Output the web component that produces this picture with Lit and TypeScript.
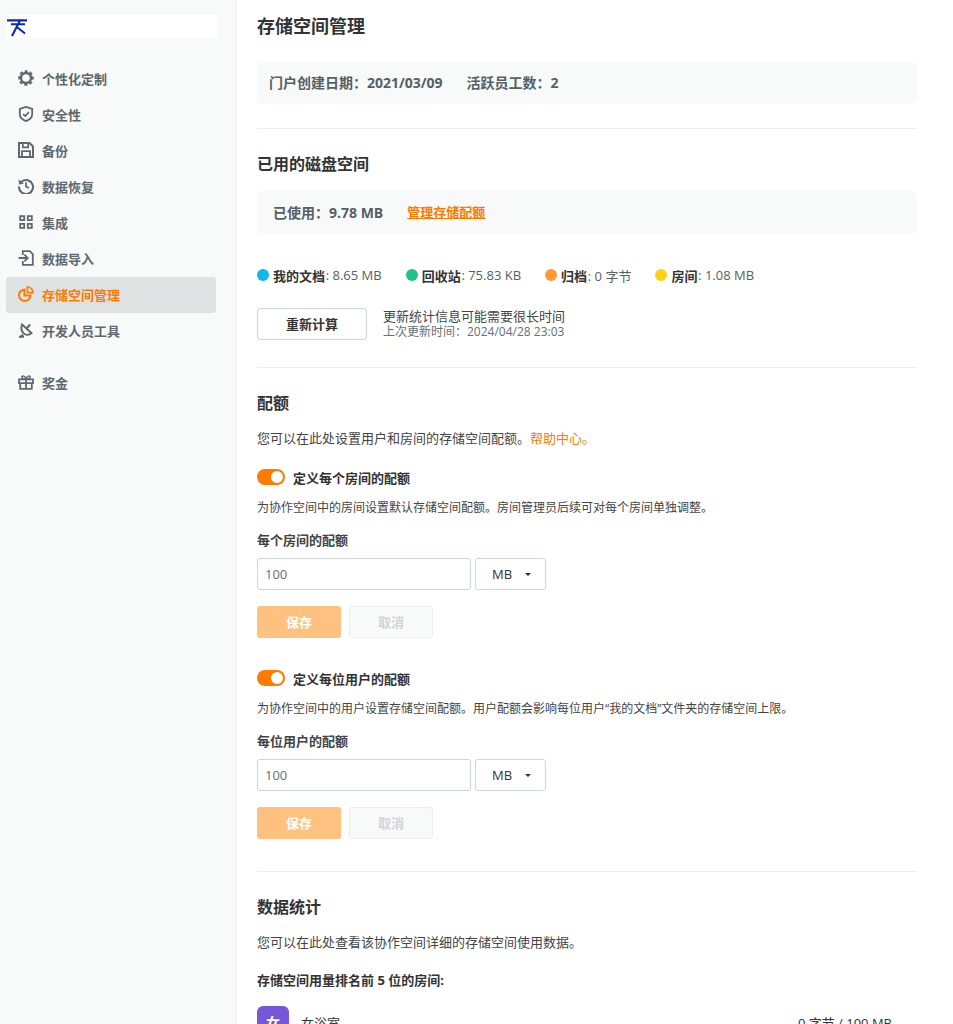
import { LitElement, html, css, svg } from "lit";
import { customElement } from "lit/decorators.js";

const icons: Record<string, unknown> = {
  gear: svg`<g fill="none" stroke="currentColor"><circle cx="8" cy="8" r="5" stroke-width="2.400"/><circle cx="8" cy="8" r="6.900" stroke-width="1.800" stroke-dasharray="3.200 2.220" stroke-dashoffset="1.600" transform="rotate(-90 8 8)"/></g>`,
  shield: svg`<g fill="none" stroke="currentColor"><path stroke-width="1.800" d="M8 .9l6.200 2V8c0 3.500-2.500 5.800-6.200 7.100C4.300 13.800 1.800 11.500 1.800 8V2.900L8 .9z"/><path stroke-width="1.600" d="M5.100 8l2.100 2.100 3.700-4"/></g>`,
  save: svg`<g fill="none" stroke="currentColor" stroke-width="2"><path d="M1 1h10.500L15 4.500V15H1V1z"/><path stroke-width="1.800" d="M4.800 1v4.300h5.400V1M4 15V9.200h8V15"/></g>`,
  history: svg`<g fill="none" stroke="currentColor" stroke-width="2"><path d="M2.800 4.300A7 7 0 1 1 1 8.500"/><path stroke-width="1.700" d="M8 4.200v4.300l2.800 1.600"/></g><path d="M.6 1.400l.4 5.200 5-.8z"/>`,
  grid: svg`<g fill="none" stroke="currentColor" stroke-width="1.800"><path d="M2.200 2.200h4v4h-4zM9.800 2.200h4v4h-4zM2.200 9.800h4v4h-4zM9.800 9.800h4v4h-4z"/></g>`,
  import: svg`<g fill="none" stroke="currentColor" stroke-width="1.800"><path d="M4.800 5V1.200h7l3 3v10.600H4.800V11"/><path d="M.6 8h9M6.400 4.700L9.700 8l-3.300 3.300"/></g>`,
  pie: svg`<g fill="none" stroke="currentColor"><path stroke-width="2" d="M6.400 3.400a5.800 5.800 0 1 0 6.200 6.200H6.400V3.400z"/><path stroke-width="1.700" d="M9.400 1a5.700 5.700 0 0 1 5.600 5.600H9.400V1z"/></g>`,
  tools: svg`<g fill="none" stroke="currentColor" stroke-width="1.900"><path d="M4 2.500l9.500 8.500c-2.500 2.300-5.800 2.200-8 .1C3.300 9 3 5.500 4 2.500z"/><path d="M8.200 7l4-4.500M5 12.500l-3 3M1 14.800h5"/></g>`,
  gift: svg`<g fill="none" stroke="currentColor" stroke-width="1.800"><path d="M1 5.300h14v3.900H1zM2.200 9.200v5.600h11.600V9.200M8 5.300v9.500"/><path stroke-width="1.500" d="M8 5.300C6 5.300 3.800 4.800 3.800 3.100S7.400 1.400 8 5.300zM8 5.300c2 0 4.200-.5 4.200-2.200S8.600 1.400 8 5.300z"/></g>`,
};

@customElement("app-root")
export class AppRoot extends LitElement {
  static styles = css`
    :host {
      display: flex;
      width: 953px;
      height: 1024px;
      overflow: hidden;
      background: #fff;
      color: #333;
      font-family: "Open Sans", "Noto Sans CJK SC", sans-serif;
      font-size: 13px;
    }
    .side {
      width: 237px;
      flex: none;
      box-sizing: border-box;
      background: #f8f9f9;
      border-right: 1px solid #eceef1;
      padding: 15px 20px 0 6px;
    }
    .logo {
      width: 211px;
      height: 24px;
      background: #fff;
      display: flex;
      align-items: center;
      overflow: visible;
    }
    .logo svg {
      overflow: visible;
    }
    nav {
      margin-top: 22px;
      display: flex;
      flex-direction: column;
    }
    .item {
      width: 210px;
      height: 36px;
      box-sizing: border-box;
      display: flex;
      align-items: center;
      gap: 8px;
      padding: 0 0 2px 12px;
      font-weight: 600;
      color: #5e686e;
      border-radius: 3px;
    }
    .item svg {
      width: 16px;
      height: 16px;
      fill: currentColor;
      flex: none;
    }
    .item.on {
      background: #dfe2e3;
      color: #ff7a00;
    }
    .item.gap {
      margin-top: 16px;
    }
    main {
      margin-left: 20px;
      width: 660px;
      flex: none;
      padding-top: 14px;
    }
    h1 {
      margin: 0;
      font-size: 18px;
      line-height: 24px;
      font-weight: 700;
    }
    h2 {
      margin: 0;
      font-size: 16px;
      line-height: 22px;
      font-weight: 700;
    }
    .box {
      background: #f8f9f9;
      border-radius: 6px;
      display: flex;
      align-items: center;
      font-weight: 600;
      font-size: 14px;
      color: #555f65;
    }
    .box b {
      font-weight: 700;
    }
    .info {
      margin-top: 24px;
      height: 42px;
      padding: 0 0 2px 12px;
      box-sizing: border-box;
    }
    .info span + span {
      margin-left: 24px;
    }
    hr {
      border: 0;
      border-top: 1px solid #eceef1;
      margin: 0;
    }
    .divider {
      margin-top: 24px;
    }
    .used {
      margin-top: 16px;
      height: 43px;
      padding: 0 0 2px 16px;
      box-sizing: border-box;
    }
    .used a {
      color: #ff7a00;
      text-decoration: underline;
      margin-left: 24px;
      font-weight: 700;
      font-size: 13px;
    }
    .legend {
      margin-top: 32px;
      height: 18px;
      display: flex;
      gap: 24px;
      align-items: center;
      color: #555f65;
    }
    .legend > span {
      display: flex;
      align-items: center;
      white-space: pre;
    }
    .legend i {
      width: 12px;
      height: 12px;
      border-radius: 50%;
      margin-right: 4px;
    }
    .legend b {
      color: #333;
      font-weight: 700;
      margin-right: 0.7px;
    }
    .calc {
      margin-top: 24px;
      display: flex;
      align-items: center;
      gap: 16px;
    }
    .btn {
      box-sizing: border-box;
      display: flex;
      align-items: center;
      justify-content: center;
      border-radius: 3px;
      font-weight: 700;
      padding-bottom: 2px;
    }
    .recalc {
      width: 110px;
      height: 32px;
      border: 1px solid #d0d5da;
      color: #333;
    }
    .calc p {
      margin: 0;
      line-height: 16px;
      color: #444;
    }
    .calc small {
      display: block;
      font-size: 12px;
      color: #657077;
    }
    .sep1 {
      margin-top: 27px;
    }
    .sec {
      margin-top: 24px;
    }
    .desc {
      margin: 14px 0 0;
      line-height: 20px;
      color: #444;
    }
    .desc a {
      color: #ff7a00;
    }
    .toggle-row {
      display: flex;
      align-items: center;
      gap: 8px;
      font-weight: 700;
      height: 18px;
    }
    .toggle {
      width: 28px;
      height: 16px;
      border-radius: 8px;
      background: #ff7a00;
      position: relative;
      flex: none;
    }
    .toggle::after {
      content: "";
      position: absolute;
      right: 2px;
      top: 2px;
      width: 12px;
      height: 12px;
      border-radius: 50%;
      background: #fff;
    }
    .hint {
      margin: 14px 0 0;
      font-size: 12px;
      line-height: 16px;
      color: #444;
    }
    .label {
      margin-top: 15px;
      height: 18px;
      line-height: 18px;
      font-weight: 700;
      color: #444;
      font-size: 13px;
    }
    .fields {
      margin-top: 9px;
      display: flex;
      gap: 4px;
    }
    .input, .select {
      box-sizing: border-box;
      height: 32px;
      border: 1px solid #d0d5da;
      border-radius: 3px;
      display: flex;
      align-items: center;
    }
    .input {
      width: 214px;
      padding-left: 7px;
      color: #657077;
    }
    .select {
      width: 71px;
      padding-left: 16px;
      color: #333;
      gap: 13px;
    }
    .select i {
      width: 0;
      height: 0;
      border: 3px solid transparent;
      border-top: 3px solid #333;
      border-bottom: 0;
    }
    .actions {
      margin-top: 16px;
      display: flex;
      gap: 8px;
    }
    .save, .cancel {
      width: 84px;
      height: 32px;
    }
    .save {
      background: #ffc180;
      color: #fff;
    }
    .cancel {
      background: #f8f9f9;
      border: 1px solid #eceef1;
      color: #d0d5da;
    }
    .quota + .quota {
      margin-top: 31px;
    }
    .quota.first {
      margin-top: 20px;
    }
    .top {
      margin-top: 18px;
      font-weight: 700;
      color: #333;
      line-height: 20px;
    }
    .room {
      margin-top: 16px;
      display: flex;
      align-items: center;
      gap: 12px;
      padding-right: 25px;
    }
    .avatar {
      width: 32px;
      height: 32px;
      border-radius: 6px;
      background: #7757d9;
      color: #fff;
      font-weight: 700;
      font-size: 14px;
      display: flex;
      align-items: center;
      justify-content: center;
    }
    .room .name {
      flex: 1;
    }
    .sep2 {
      margin-top: 32px;
    }
    .stats {
      margin-top: 24px;
    }
  `;

  quota(title: string, hint: string, label: string, first = false) {
    return html`<div class="quota ${first ? "first" : ""}">
      <div class="toggle-row"><span class="toggle"></span>${title}</div>
      <p class="hint">${hint}</p>
      <div class="label">${label}</div>
      <div class="fields">
        <div class="input">100</div>
        <div class="select">MB<i></i></div>
      </div>
      <div class="actions">
        <div class="btn save">保存</div>
        <div class="btn cancel">取消</div>
      </div>
    </div>`;
  }

  render() {
    const items = [
      ["gear", "个性化定制"],
      ["shield", "安全性"],
      ["save", "备份"],
      ["history", "数据恢复"],
      ["grid", "集成"],
      ["import", "数据导入"],
      ["pie", "存储空间管理", "on"],
      ["tools", "开发人员工具"],
      ["gift", "奖金", "gap"],
    ];
    const legend = [
      ["#13b7ec", "我的文档", "8.65 MB"],
      ["#22c386", "回收站", "75.83 KB"],
      ["#ff9933", "归档", "0 字节"],
      ["#ffd30f", "房间", "1.08 MB"],
    ];
    return html`
      <aside class="side">
        <div class="logo">
          <svg width="24" height="24" viewBox="0 0 24 24" fill="none" stroke="#0a2bb5" stroke-width="2.100">
            <path d="M1 5.400h20M5 9.200h14M14.500 4.500L6 21M11.500 12.500l7.500 6"/>
          </svg>
        </div>
        <nav>
          ${items.map(
            ([ic, t, c]) => html`<div class="item ${c ?? ""}">
              <svg viewBox="0 0 16 16">${icons[ic]}</svg>${t}
            </div>`
          )}
        </nav>
      </aside>
      <main>
        <h1>存储空间管理</h1>
        <div class="box info">
          <span>门户创建日期：<b>2021/03/09</b></span>
          <span>活跃员工数：<b>2</b></span>
        </div>
        <hr class="divider" />
        <h2 class="sec">已用的磁盘空间</h2>
        <div class="box used">
          <span>已使用：<b>9.78 MB</b></span><a>管理存储配额</a>
        </div>
        <div class="legend">
          ${legend.map(
            ([c, n, v]) => html`<span><i style="background:${c}"></i><b>${n}</b>: ${v}</span>`
          )}
        </div>
        <div class="calc">
          <div class="btn recalc">重新计算</div>
          <p>更新统计信息可能需要很长时间<small>上次更新时间：2024/04/28 23:03</small></p>
        </div>
        <hr class="sep1" />
        <h2 class="sec">配额</h2>
        <p class="desc">您可以在此处设置用户和房间的存储空间配额。<a>帮助中心。</a></p>
        ${this.quota(
          "定义每个房间的配额",
          "为协作空间中的房间设置默认存储空间配额。房间管理员后续可对每个房间单独调整。",
          "每个房间的配额",
          true
        )}
        ${this.quota(
          "定义每位用户的配额",
          "为协作空间中的用户设置存储空间配额。用户配额会影响每位用户“我的文档”文件夹的存储空间上限。",
          "每位用户的配额"
        )}
        <hr class="sep2" />
        <h2 class="stats">数据统计</h2>
        <p class="desc">您可以在此处查看该协作空间详细的存储空间使用数据。</p>
        <div class="top">存储空间用量排名前 5 位的房间:</div>
        <div class="room">
          <div class="avatar">女</div>
          <div class="name">女浴室</div>
          <div>0 字节 / 100 MB</div>
        </div>
      </main>
    `;
  }
}
